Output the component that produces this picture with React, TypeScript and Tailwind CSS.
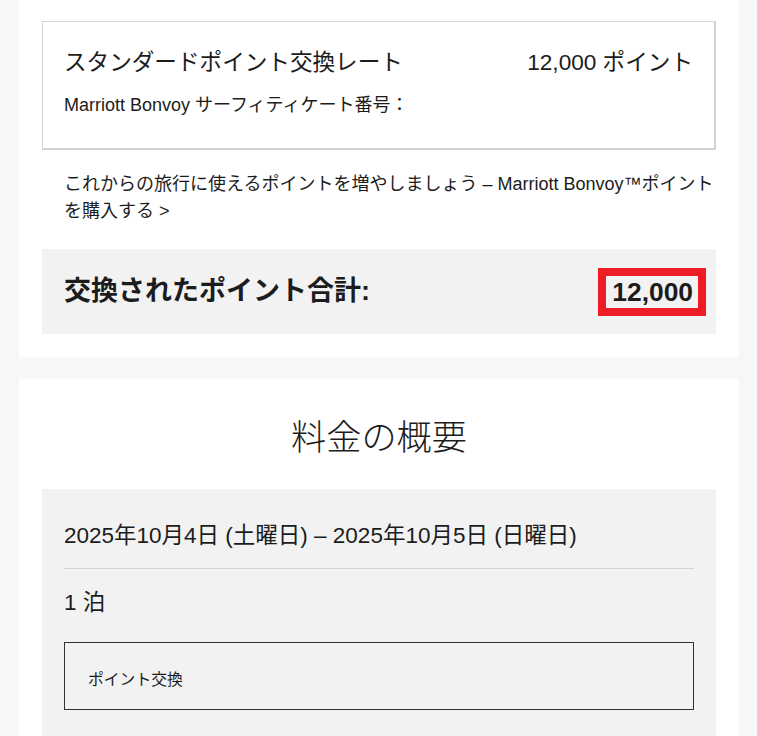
import React from "react";

export default function App() {
  return (
    <div className="min-h-screen bg-[#f7f7f7] pl-[19px] pr-[18px] pb-[40px] font-['Liberation_Sans','Noto_Sans_CJK_JP',sans-serif] text-[#1c1c1c]">
      {/* Card 1 */}
      <div className="bg-white px-[23px] pt-[21px] pb-[23px]">
        <div className="border border-r-2 border-b-2 border-[#d4d4d4] pl-[21px] pr-[21px] pt-[24px] pb-[30px]">
          <div className="flex items-center justify-between text-[22.6px] leading-[33px]">
            <span>スタンダードポイント交換レート</span>
            <span>12,000 ポイント</span>
          </div>
          <div className="mt-[13px] text-[18px] leading-[26.4px]">
            Marriott Bonvoy サーフィティケート番号：
          </div>
        </div>
        <p className="mt-[21px] pl-[22px] text-[18px] leading-[26.4px]">
          これからの旅行に使えるポイントを増やしましょう – Marriott Bonvoy™ポイント
          <br />
          を購入する &gt;
        </p>
        <div className="mt-[25px] flex h-[85px] items-center justify-between bg-[#f2f2f2] pl-[22px] pr-[23px]">
          <span className="text-[27px] font-bold leading-none">交換されたポイント合計:</span>
          <span className="relative text-[26.4px] font-bold leading-none">
            12,000
            <span className="absolute -left-[14px] -right-[13px] -top-[11px] -bottom-[11px] border-8 border-[#ee1c25]" />
          </span>
        </div>
      </div>

      {/* Card 2 */}
      <div className="mt-[22px] bg-white px-[23px] pt-[33px] pb-[40px]">
        <h2 className="text-center text-[35.2px] font-light leading-[52.8px]">料金の概要</h2>
        <div className="mt-[24px] bg-[#f2f2f2] px-[22px] pt-[30px] pb-[40px]">
          <div className="text-[22.5px] leading-[33px]">
            2025年10月4日 (土曜日) – 2025年10月5日 (日曜日)
          </div>
          <div className="mt-[16px] border-t border-[#d4d4d4]" />
          <div className="mt-[17px] text-[22.5px] leading-[33px]">1 泊</div>
          <div className="mt-[23px] border border-[#333333] pl-[23px] pr-[23px] pt-[25px] pb-[18px] text-[15.8px] leading-[23.1px]">
            ポイント交換
          </div>
        </div>
      </div>
    </div>
  );
}
